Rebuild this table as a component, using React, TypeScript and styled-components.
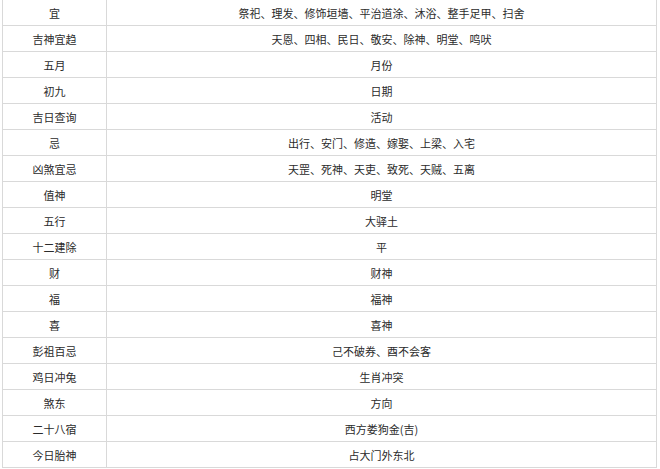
import React from "react";
import styled, { createGlobalStyle } from "styled-components";

const GlobalStyle = createGlobalStyle`
  html, body { margin: 0; padding: 0; background: #ffffff; }
  body { font-family: "Noto Sans CJK SC", "Noto Sans", sans-serif; }
`;

const Wrap = styled.div`
  padding-left: 2px;
  width: 655px;
`;

const Table = styled.div`
  display: grid;
  grid-template-columns: 104px 549px;
  border-left: 1px solid #d9d9d9;
  border-right: 1px solid #d9d9d9;
`;

const Cell = styled.div<{ $first?: boolean }>`
  height: 25px;
  border-bottom: 1px solid #d9d9d9;
  border-right: ${(p) => (p.$first ? "1px solid #d9d9d9" : "none")};
  display: flex;
  align-items: center;
  justify-content: center;
  font-size: 11px;
  color: #2b2b2b;
  white-space: nowrap;
`;

const rows: [string, string][] = [
  ["宜", "祭祀、理发、修饰垣墙、平治道涂、沐浴、整手足甲、扫舍"],
  ["吉神宜趋", "天恩、四相、民日、敬安、除神、明堂、鸣吠"],
  ["五月", "月份"],
  ["初九", "日期"],
  ["吉日查询", "活动"],
  ["忌", "出行、安门、修造、嫁娶、上梁、入宅"],
  ["凶煞宜忌", "天罡、死神、天吏、致死、天贼、五离"],
  ["值神", "明堂"],
  ["五行", "大驿土"],
  ["十二建除", "平"],
  ["财", "财神"],
  ["福", "福神"],
  ["喜", "喜神"],
  ["彭祖百忌", "己不破券、酉不会客"],
  ["鸡日冲兔", "生肖冲突"],
  ["煞东", "方向"],
  ["二十八宿", "西方娄狗金(吉)"],
  ["今日胎神", "占大门外东北"],
];

export default function App() {
  return (
    <>
      <GlobalStyle />
      <Wrap>
        <Table>
          {rows.map(([k, v]) => (
            <React.Fragment key={k}>
              <Cell $first>{k}</Cell>
              <Cell>{v}</Cell>
            </React.Fragment>
          ))}
        </Table>
      </Wrap>
    </>
  );
}
